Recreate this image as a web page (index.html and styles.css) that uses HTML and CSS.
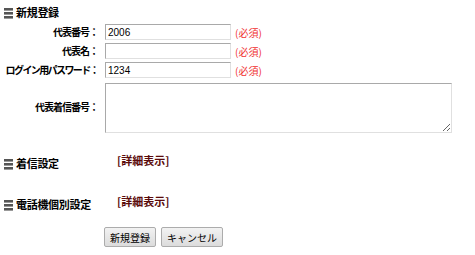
FILE: index.html
```html
<!DOCTYPE html>
<html>
<head>
    <title>新規登録</title>
    <link rel="stylesheet" href="styles.css">
</head>
<body>
    <div class="page">
        <h2 class="sectionTitle"><span class="barIcon"><i></i><i></i><i></i></span>新規登録</h2>
        <div class="formGrid">
            <label class="fieldLabel">代表番号：</label>
            <div class="fieldCell"><input type="text" class="textInput" value="2006"><span class="required">(必須)</span></div>
            <label class="fieldLabel">代表名：</label>
            <div class="fieldCell"><input type="text" class="textInput" value=""><span class="required">(必須)</span></div>
            <label class="fieldLabel longLabel">ログイン用パスワード：</label>
            <div class="fieldCell"><input type="text" class="textInput" value="1234"><span class="required">(必須)</span></div>
            <label class="fieldLabel areaLabel">代表着信番号：</label>
            <div class="fieldCell"><textarea class="textArea"></textarea></div>
        </div>
        <div class="detailRow first">
            <h2 class="sectionTitle"><span class="barIcon"><i></i><i></i><i></i></span>着信設定</h2>
            <a class="detailLink" href="#">[詳細表示]</a>
        </div>
        <div class="detailRow">
            <h2 class="sectionTitle"><span class="barIcon"><i></i><i></i><i></i></span>電話機個別設定</h2>
            <a class="detailLink" href="#">[詳細表示]</a>
        </div>
        <div class="buttonRow">
            <button class="btn">新規登録</button>
            <button class="btn">キャンセル</button>
        </div>
    </div>
</body>
</html>
```

FILE: styles.css
```css
body {
    margin: 0;
    background-color: #fff;
    font-family: "Noto Sans CJK JP", "Liberation Sans", sans-serif;
    font-size: 11px;
    color: #000;
}
.page {
    padding: 5px 0 0 4px;
}
.sectionTitle {
    display: flex;
    align-items: center;
    margin: 0;
    font-size: 11px;
    font-weight: bold;
    line-height: 14px;
    letter-spacing: -0.3px;
}
.barIcon {
    display: flex;
    flex-direction: column;
    gap: 1px;
    width: 9px;
    margin: 2px 3px 0 0;
}
.barIcon i {
    display: block;
    height: 2px;
    border-bottom: 1px solid #9a9a9a;
    background-color: #555;
}
.formGrid {
    display: grid;
    grid-template-columns: 101px auto;
    row-gap: 3px;
    margin-top: 5px;
}
.fieldLabel {
    text-align: right;
    font-size: 10px;
    font-weight: bold;
    line-height: 16px;
    letter-spacing: -1px;
    padding-right: 7px;
    white-space: nowrap;
}
.longLabel {
    letter-spacing: -1.6px;
}
.areaLabel {
    align-self: center;
}
.fieldCell {
    display: flex;
    align-items: center;
}
.textInput {
    box-sizing: border-box;
    width: 126px;
    height: 16px;
    margin: 0;
    padding: 0 2px;
    border: 1px solid #a9a9a9;
    border-bottom-color: #e0e0e0;
    border-right-color: #e0e0e0;
    font-family: "Liberation Sans", sans-serif;
    font-size: 10px;
}
.required {
    margin-left: 4px;
    color: #f03030;
    font-size: 10px;
}
.textArea {
    box-sizing: border-box;
    width: 347px;
    height: 50px;
    margin: 2px 0 0;
    border: 1px solid #a9a9a9;
    border-bottom-color: #e0e0e0;
    border-right-color: #e0e0e0;
}
.detailRow {
    display: flex;
    align-items: flex-start;
    margin-top: 23px;
}
.detailRow.first {
    margin-top: 19px;
}
.detailRow .sectionTitle {
    width: 113px;
    margin-top: 4px;
}
.detailLink {
    color: #5a0a0a;
    font-weight: bold;
    font-size: 11px;
    text-decoration: none;
}
.buttonRow {
    display: flex;
    gap: 5px;
    margin: 16px 0 0 100px;
}
.btn {
    height: 20px;
    padding: 0 5px;
    border: 1px solid #acacac;
    border-radius: 2px;
    background: linear-gradient(#f2f2f2, #dcdcdc);
    font-family: "Noto Sans CJK JP", sans-serif;
    font-size: 10px;
    color: #000;
}
```
